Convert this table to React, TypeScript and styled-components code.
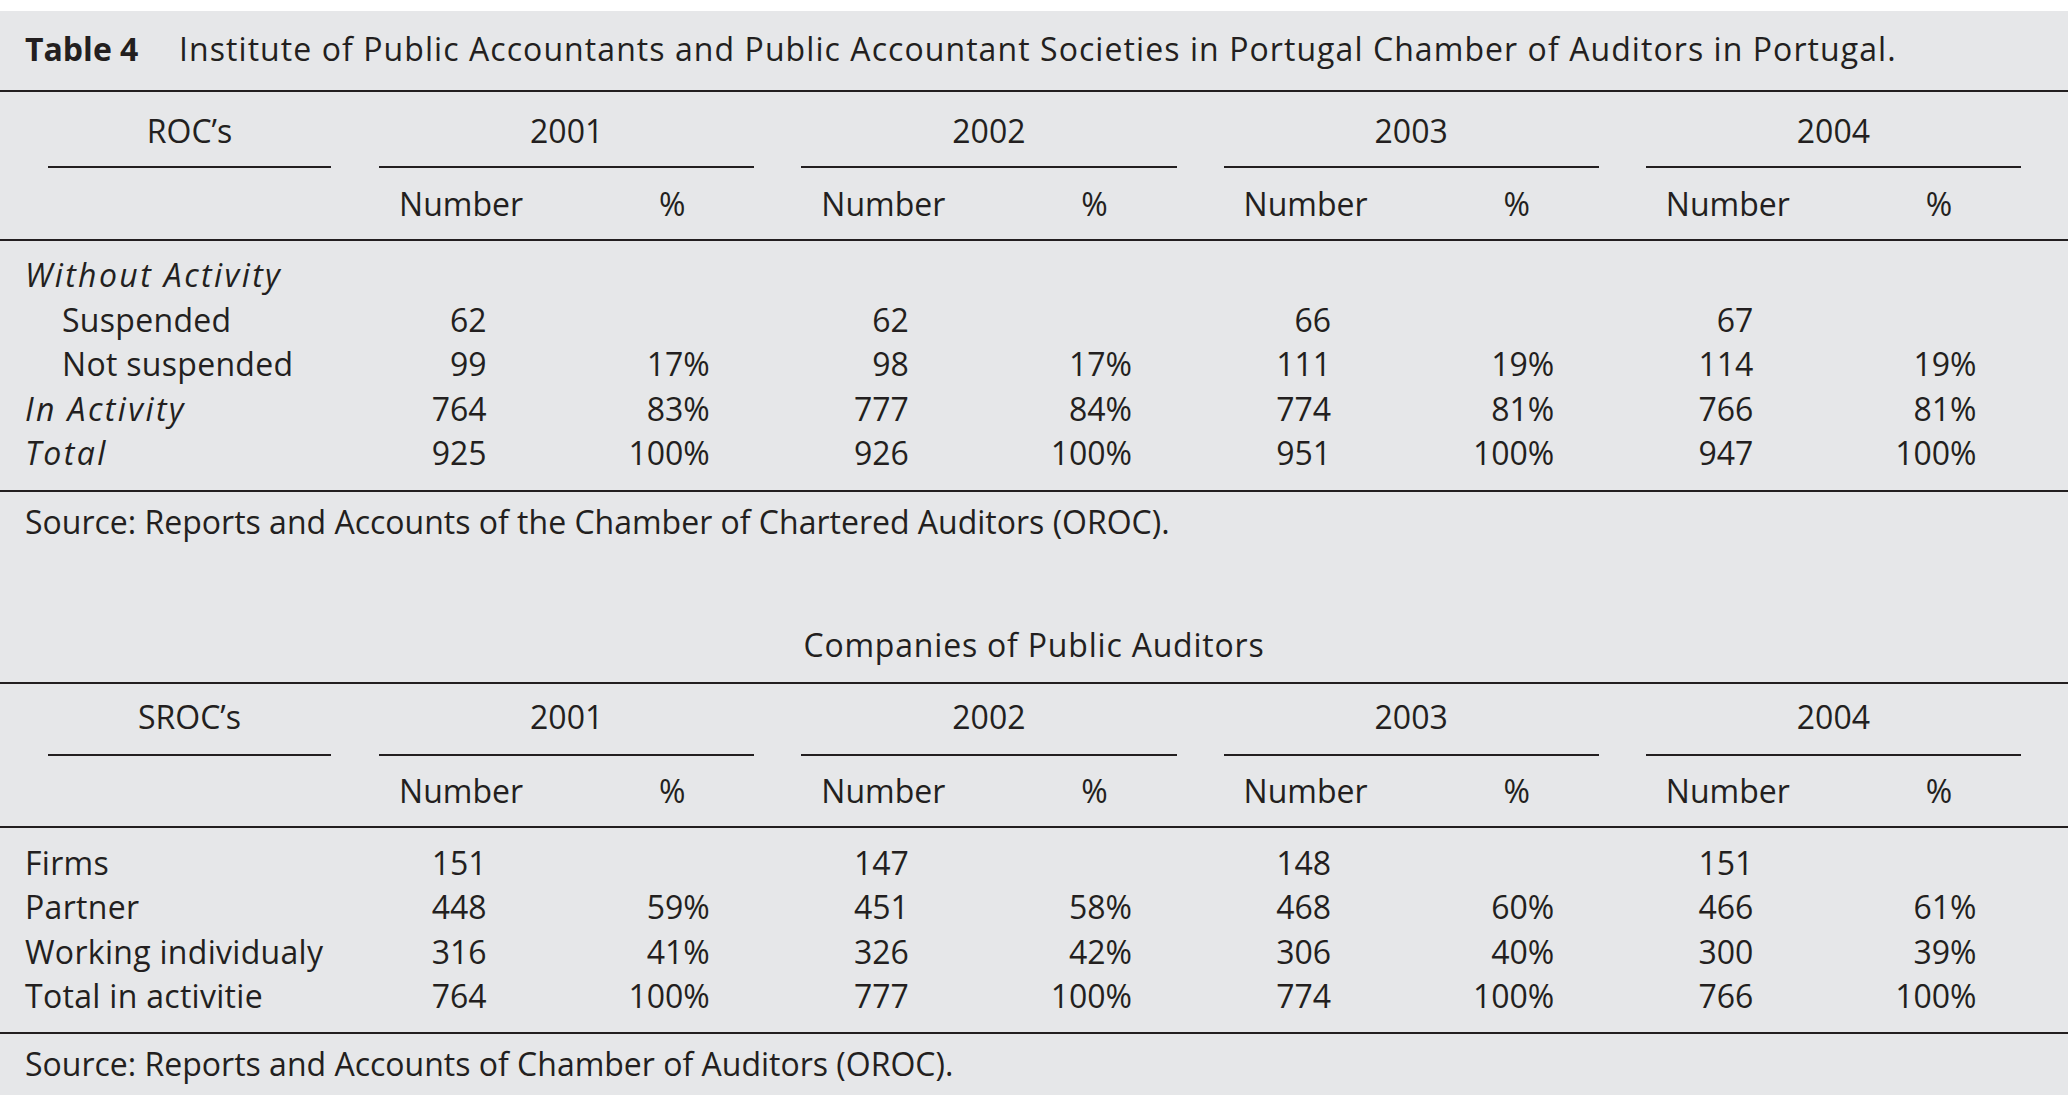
import React from "react";
import styled, { createGlobalStyle } from "styled-components";

const INK = "#231f20";
const PAPER = "#e6e7e9";
const COLS = "355.5px repeat(8, 211.125px)";

const GlobalStyle = createGlobalStyle`
  html, body { margin: 0; padding: 0; background: #ffffff; }
  body {
    font-family: "Open Sans", "Noto Sans", "DejaVu Sans", sans-serif;
    color: ${INK};
  }
`;

const Page = styled.main`
  padding-top: 11px;
  width: 2068px;
`;

const Panel = styled.section`
  background: ${PAPER};
  min-height: 1084px;
  font-size: 32px;
  line-height: 45px;
`;

const Caption = styled.h1`
  margin: 0;
  height: 74px;
  padding: 0 0 5px 25px;
  display: flex;
  align-items: center;
  font-size: 32px;
  font-weight: 400;
  line-height: 45px;
  letter-spacing: 1.07px;
  white-space: nowrap;
`;

const CaptionLabel = styled.span`
  display: inline-block;
  width: 154px;
  font-weight: 700;
  letter-spacing: 0;
`;

const Rule = styled.div`
  height: 2px;
  background: ${INK};
`;

const HeadGrid = styled.div`
  display: grid;
  grid-template-columns: ${COLS};
`;

const GroupHead = styled.div<{ $span: number; $left: number; $right: number; $compact?: boolean }>`
  grid-column: span ${(p) => p.$span};
  display: flex;
  flex-direction: column;
  padding: ${(p) => (p.$compact ? 10 : 16)}px ${(p) => p.$right}px 0 ${(p) => p.$left}px;
`;

const GroupTitle = styled.div`
  height: 45px;
  line-height: 45px;
  text-align: center;
  white-space: nowrap;
`;

const GroupLine = styled.div<{ $compact?: boolean }>`
  height: 2px;
  background: ${INK};
  margin-top: ${(p) => (p.$compact ? 15 : 13)}px;
`;

const SubHead = styled.div<{ $compact?: boolean }>`
  padding-top: ${(p) => (p.$compact ? 12 : 13)}px;
  padding-bottom: ${(p) => (p.$compact ? 13 : 13)}px;
  height: 45px;
  line-height: 45px;
  text-align: center;
`;

const BodyGrid = styled.div<{ $compact?: boolean }>`
  display: grid;
  grid-template-columns: ${COLS};
  grid-auto-rows: 44.5px;
  line-height: 44.5px;
  padding-top: ${(p) => (p.$compact ? 13 : 12)}px;
  padding-bottom: ${(p) => (p.$compact ? 13 : 14)}px;
`;

const RowLabel = styled.div<{ $italic?: boolean; $indent?: boolean }>`
  padding-left: ${(p) => (p.$indent ? 62 : 25)}px;
  font-style: ${(p) => (p.$italic ? "italic" : "normal")};
  letter-spacing: ${(p) => (p.$italic ? "2.4px" : "0.3px")};
  white-space: nowrap;
`;

const Value = styled.div<{ $pct?: boolean }>`
  text-align: right;
  padding-right: ${(p) => (p.$pct ? 68 : 80)}px;
  white-space: nowrap;
`;

const Source = styled.p`
  margin: 0;
  padding: 7px 0 0 25px;
  height: 45px;
  line-height: 45px;
  white-space: nowrap;
`;

const SubTitle = styled.h2`
  margin: 0;
  padding: 78px 0 15px;
  font-size: 32px;
  font-weight: 400;
  line-height: 45px;
  letter-spacing: 0.8px;
  text-align: center;
`;

type Row = { label: string; italic?: boolean; indent?: boolean; values: string[] };

const YEARS = ["2001", "2002", "2003", "2004"];

const rocRows: Row[] = [
  { label: "Without Activity", italic: true, values: ["", "", "", "", "", "", "", ""] },
  { label: "Suspended", indent: true, values: ["62", "", "62", "", "66", "", "67", ""] },
  { label: "Not suspended", indent: true, values: ["99", "17%", "98", "17%", "111", "19%", "114", "19%"] },
  { label: "In Activity", italic: true, values: ["764", "83%", "777", "84%", "774", "81%", "766", "81%"] },
  { label: "Total", italic: true, values: ["925", "100%", "926", "100%", "951", "100%", "947", "100%"] },
];

const srocRows: Row[] = [
  { label: "Firms", values: ["151", "", "147", "", "148", "", "151", ""] },
  { label: "Partner", values: ["448", "59%", "451", "58%", "468", "60%", "466", "61%"] },
  { label: "Working individualy", values: ["316", "41%", "326", "42%", "306", "40%", "300", "39%"] },
  { label: "Total in activitie", values: ["764", "100%", "777", "100%", "774", "100%", "766", "100%"] },
];

function DataTable({ head, rows, compact }: { head: string; rows: Row[]; compact?: boolean }) {
  return (
    <>
      <HeadGrid>
        <GroupHead $span={1} $left={48} $right={24.5} $compact={compact}>
          <GroupTitle>{head}</GroupTitle>
          <GroupLine $compact={compact} />
        </GroupHead>
        {YEARS.map((y) => (
          <GroupHead key={y} $span={2} $left={23.5} $right={23.5} $compact={compact}>
            <GroupTitle>{y}</GroupTitle>
            <GroupLine $compact={compact} />
          </GroupHead>
        ))}
        <SubHead $compact={compact} />
        {YEARS.map((y) => (
          <React.Fragment key={y}>
            <SubHead $compact={compact}>Number</SubHead>
            <SubHead $compact={compact}>%</SubHead>
          </React.Fragment>
        ))}
      </HeadGrid>
      <Rule />
      <BodyGrid $compact={compact}>
        {rows.map((r) => (
          <React.Fragment key={r.label}>
            <RowLabel $italic={r.italic} $indent={r.indent}>
              {r.label}
            </RowLabel>
            {r.values.map((v, i) => (
              <Value key={i} $pct={i % 2 === 1}>
                {v}
              </Value>
            ))}
          </React.Fragment>
        ))}
      </BodyGrid>
      <Rule />
    </>
  );
}

export default function App() {
  return (
    <>
      <GlobalStyle />
      <Page>
        <Panel>
          <Caption>
            <CaptionLabel>Table 4</CaptionLabel>
            Institute of Public Accountants and Public Accountant Societies in Portugal Chamber of Auditors in Portugal.
          </Caption>
          <Rule />
          <DataTable head="ROC’s" rows={rocRows} />
          <Source>Source: Reports and Accounts of the Chamber of Chartered Auditors (OROC).</Source>
          <SubTitle>Companies of Public Auditors</SubTitle>
          <Rule />
          <DataTable head="SROC’s" rows={srocRows} compact />
          <Source>Source: Reports and Accounts of Chamber of Auditors (OROC).</Source>
        </Panel>
      </Page>
    </>
  );
}
